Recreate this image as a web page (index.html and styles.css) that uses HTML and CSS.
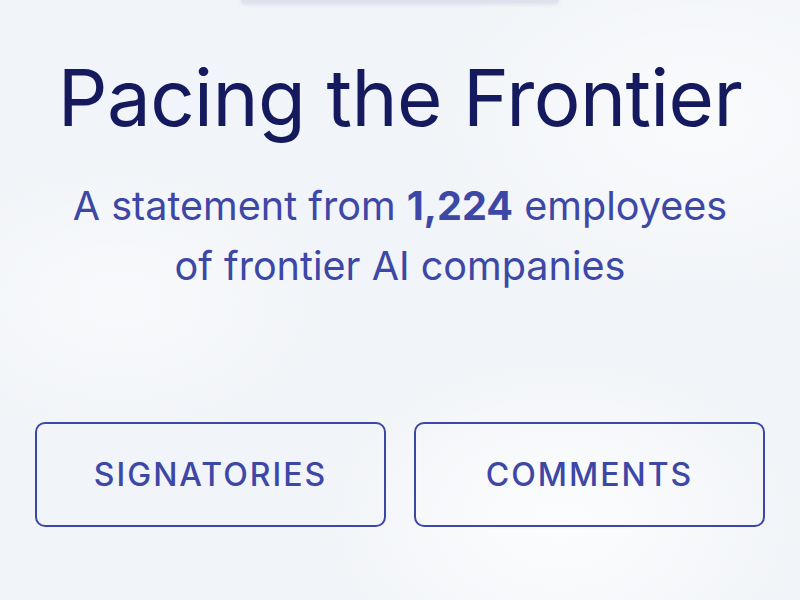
FILE: index.html
```html
<!DOCTYPE html>
<html lang="en">
<head>
    <meta charset="UTF-8">
    <meta name="viewport" content="width=device-width, initial-scale=1.0">
    <title>Pacing the Frontier</title>
    <link rel="stylesheet" href="styles.css">
</head>
<body>
    <div class="top-bar"></div>

    <main class="hero">
        <h1 class="title">Pacing the Frontier</h1>
        <p class="subtitle">
            A statement from <b>1,224</b> employees<br>
            of frontier AI companies
        </p>

        <div class="actions">
            <a class="btn" href="#signatories">SIGNATORIES</a>
            <a class="btn" href="#comments">COMMENTS</a>
        </div>
    </main>
</body>
</html>
```

FILE: styles.css
```css
* {
    margin: 0;
    padding: 0;
    box-sizing: border-box;
}

body {
    width: 800px;
    height: 600px;
    overflow: hidden;
    font-family: 'Inter', 'Noto Sans', sans-serif;
    background-color: #f1f4f8;
    background-image:
        radial-gradient(ellipse 260px 180px at 560px 520px, rgba(255,255,255,0.8), rgba(255,255,255,0)),
        radial-gradient(ellipse 300px 200px at 700px 120px, rgba(255,255,255,0.6), rgba(255,255,255,0)),
        radial-gradient(ellipse 240px 160px at 120px 300px, rgba(255,255,255,0.5), rgba(255,255,255,0));
}

.top-bar {
    width: 318px;
    height: 3px;
    margin: 0 auto;
    background-color: #dfe2ec;
    border-radius: 0 0 4px 4px;
    box-shadow: 0 1px 4px rgba(40,50,110,0.15);
}

.hero {
    display: flex;
    flex-direction: column;
    align-items: center;
    padding: 0 35px;
}

.title {
    margin-top: 45px;
    font-size: 78px;
    font-weight: 400;
    line-height: 100px;
    color: #151a5e;
    letter-spacing: -0.6px;
}

.subtitle {
    margin-top: 28px;
    font-size: 39.6px;
    line-height: 60px;
    color: #3d47a6;
    text-align: center;
}

.subtitle b {
    font-weight: 700;
}

.actions {
    display: flex;
    gap: 28px;
    width: 100%;
    margin-top: 126px;
}

.btn {
    flex: 1;
    height: 105px;
    display: flex;
    align-items: center;
    justify-content: center;
    border: 2px solid #3d47a6;
    border-radius: 10px;
    font-size: 32px;
    font-weight: 500;
    letter-spacing: 2px;
    color: #3d47a6;
    text-decoration: none;
}
```
